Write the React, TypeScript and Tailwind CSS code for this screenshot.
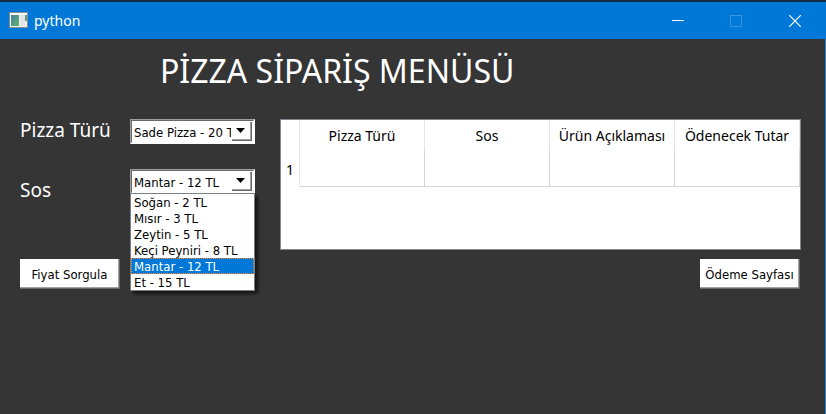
import { useState } from "react";

const pizzas = ["Sade Pizza - 20 TL"];
const sauces = ["Soğan - 2 TL", "Mısır - 3 TL", "Zeytin - 5 TL", "Keçi Peyniri - 8 TL", "Mantar - 12 TL", "Et - 15 TL"];
const columns = ["Pizza Türü", "Sos", "Ürün Açıklaması", "Ödenecek Tutar"];

function TitleBar() {
  return (
    <header className="flex h-[39px] items-center border-t-2 border-t-[#152c42] bg-[#0078d7] pl-[9px] text-white">
      <svg width="19" height="16" viewBox="0 0 19 16" className="mb-0.5" aria-hidden="true">
        <defs>
          <linearGradient id="pane" x1="0" y1="0" x2="1" y2="1">
            <stop offset="0" stopColor="#4a7fa5" />
            <stop offset="1" stopColor="#5fb56c" />
          </linearGradient>
        </defs>
        <rect x="0.5" y="0.5" width="18" height="15" fill="#f1f1f1" stroke="#8a8f94" />
        <rect x="1" y="1" width="17" height="2" fill="#ffffff" />
        <rect x="2" y="3" width="8" height="11" fill="url(#pane)" />
        <rect x="11" y="3" width="5" height="11" fill="#e3e5e8" />
        <rect x="16" y="3" width="2" height="6" fill="#5aa07e" />
      </svg>
      <h1 className="ml-[6px] flex-1 text-[14px] leading-5">python</h1>
      <button type="button" aria-label="Küçült" className="flex h-full w-[60px] items-center justify-center">
        <svg width="12" height="12" viewBox="0 0 12 12" stroke="#fff">
          <path d="M0 5.5h12" />
        </svg>
      </button>
      <button type="button" aria-label="Büyüt" disabled className="flex h-full w-14 items-center justify-center">
        <svg width="12" height="12" viewBox="0 0 12 12" fill="none" stroke="#3997e1">
          <rect x="0.5" y="0.5" width="11" height="11" />
        </svg>
      </button>
      <button type="button" aria-label="Kapat" className="flex h-full w-[62px] items-center justify-center">
        <svg width="12" height="12" viewBox="0 0 12 12" stroke="#fff" strokeWidth="1.2">
          <path d="M0 0l12 12M12 0L0 12" />
        </svg>
      </button>
    </header>
  );
}

function ComboBox({ id, options, value, onChange }: { id: string; options: string[]; value: string; onChange: (value: string) => void }) {
  return (
    <div className="relative h-[25px] border border-white border-l-[#a0a0a0] border-t-[#a0a0a0]">
      <select
        id={id}
        value={value}
        onChange={(event) => onChange(event.target.value)}
        className="block h-full w-full appearance-none rounded-none border border-white border-l-[#696969] border-t-[#696969] bg-white pl-[2px] pr-[22px] pt-0.5 font-['DejaVu_Sans_Condensed','DejaVu_Sans',sans-serif] text-[13px] leading-[15px] text-black outline-none"
      >
        {options.map((option) => (
          <option key={option}>{option}</option>
        ))}
      </select>
      <span className="pointer-events-none absolute bottom-[2px] right-[2px] top-[2px] flex w-5 items-center justify-center border-b border-r border-[#696969] bg-white pb-0.5 pr-0.5 shadow-[inset_-1px_-1px_0_#a0a0a0]">
        <svg width="9" height="5" viewBox="0 0 9 5" aria-hidden="true">
          <path d="M0 0h9L4.500 5z" />
        </svg>
      </span>
    </div>
  );
}

function PushButton({ children }: { children: string }) {
  return (
    <button
      type="button"
      className="h-[30px] w-[100px] whitespace-nowrap border-b border-r border-[#696969] bg-white pt-0.5 font-['DejaVu_Sans_Condensed','DejaVu_Sans',sans-serif] text-[13px] leading-[15px] text-black shadow-[inset_-1px_-1px_0_#a0a0a0]"
    >
      {children}
    </button>
  );
}

export default function App() {
  const [pizza, setPizza] = useState(pizzas[0]);
  const [sauce, setSauce] = useState("Mantar - 12 TL");

  return (
    <div className="flex min-h-screen flex-col bg-[#353535] font-['Noto_Sans',sans-serif]">
      <TitleBar />
      <main className="flex-1 border-r border-[#2a8ad4] pb-5 pl-5 pr-6 pt-2">
        <h2 className="pl-[140px] text-[32px] leading-[48px] text-white">PİZZA SİPARİŞ MENÜSÜ</h2>
        <div className="mt-6 flex items-start">
          <div className="flex w-[110px] flex-col gap-[38px] text-[19px] leading-[22px] text-white">
            <label htmlFor="pizza">Pizza Türü</label>
            <label htmlFor="sauce">Sos</label>
          </div>
          <div className="flex w-[125px] flex-col gap-[25px]">
            <ComboBox id="pizza" options={pizzas} value={pizza} onChange={setPizza} />
            <div className="relative">
              <ComboBox id="sauce" options={sauces} value={sauce} onChange={setSauce} />
              <ul
                role="listbox"
                aria-label="Sos"
                className="absolute left-0 top-6 w-full border border-[#7a8088] bg-white font-['DejaVu_Sans_Condensed','DejaVu_Sans',sans-serif] text-[13px] leading-[15px] text-black shadow-[3px_3px_3px_rgba(0,0,0,0.6)]"
              >
                {sauces.map((option) => (
                  <li
                    key={option}
                    role="option"
                    aria-selected={option === sauce}
                    onClick={() => setSauce(option)}
                    className="flex h-4 items-center border border-dotted border-transparent pl-[2px] pt-px aria-selected:border-[#ff8728] aria-selected:bg-[#0078d7] aria-selected:text-white"
                  >
                    {option}
                  </li>
                ))}
              </ul>
            </div>
          </div>
          <div className="ml-[25px] h-[131px] flex-1 border border-[#82878f] bg-white">
            <table className="w-full table-fixed border-separate border-spacing-0 text-[14px] leading-5 text-black">
              <colgroup>
                <col className="w-[19px]" />
                <col />
                <col />
                <col />
                <col />
              </colgroup>
              <thead>
                <tr className="h-[30px]">
                  <td className="border-r border-[#e5e5e5]" />
                  {columns.map((column) => (
                    <th key={column} scope="col" className="whitespace-nowrap border-r border-[#e5e5e5] p-0 pt-0.5 font-normal">
                      {column}
                    </th>
                  ))}
                </tr>
              </thead>
              <tbody>
                <tr className="h-[37px]">
                  <th scope="row" className="border-r border-[#e5e5e5] p-0 pt-0.5 font-normal">
                    1
                  </th>
                  {columns.map((column) => (
                    <td key={column} className="border-b border-r border-[#d4d4d4]" />
                  ))}
                </tr>
              </tbody>
            </table>
          </div>
        </div>
        <div className="mt-[9px] flex justify-between pr-px">
          <PushButton>Fiyat Sorgula</PushButton>
          <PushButton>Ödeme Sayfası</PushButton>
        </div>
      </main>
    </div>
  );
}
